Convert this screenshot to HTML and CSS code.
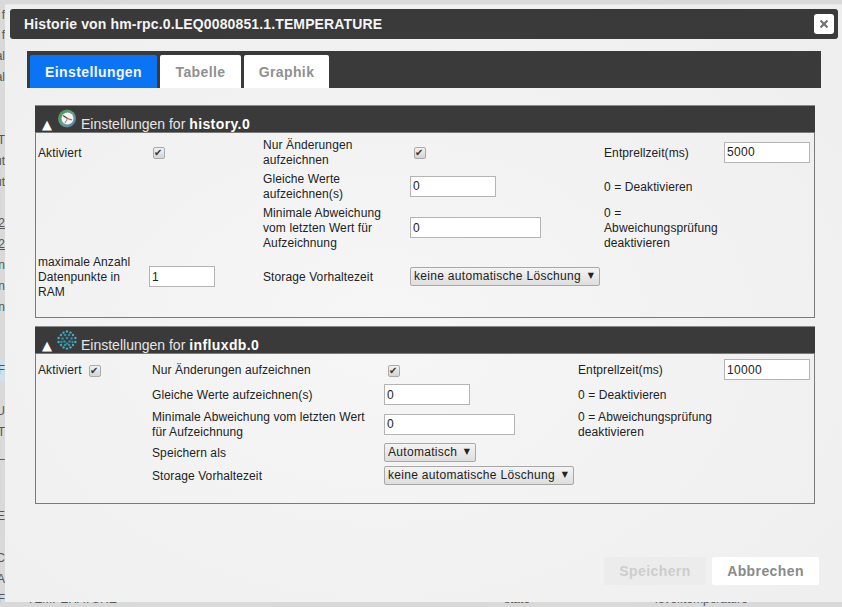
FILE: index.html
```html
<!DOCTYPE html>
<html lang="de">
<head>
<meta charset="utf-8">
<title>Historie</title>
<link rel="stylesheet" href="styles.css">
</head>
<body>
<div class="page">
  <div class="bg-row"><span class="bg-cut">f</span></div>
  <div class="bg-row"><span class="bg-cut">f</span></div>
  <div class="bg-row"><span class="bg-cut">al</span></div>
  <div class="bg-row"><span class="bg-cut">al</span></div>
  <div class="bg-row"></div>
  <div class="bg-row"></div>
  <div class="bg-row"><span class="bg-cut">T</span></div>
  <div class="bg-row"><span class="bg-cut">ut</span></div>
  <div class="bg-row"><span class="bg-cut">ut</span></div>
  <div class="bg-row"></div>
  <div class="bg-row"><span class="bg-cut bg-link">2</span></div>
  <div class="bg-row"><span class="bg-cut bg-link">2</span></div>
  <div class="bg-row"><span class="bg-cut">n</span></div>
  <div class="bg-row"><span class="bg-cut">n</span></div>
  <div class="bg-row"><span class="bg-cut">n</span></div>
  <div class="bg-row"></div>
  <div class="bg-row"></div>
  <div class="bg-row bg-selected"><span class="bg-cut">F</span></div>
  <div class="bg-row"></div>
  <div class="bg-row"><span class="bg-cut">U</span></div>
  <div class="bg-row"><span class="bg-cut">T</span></div>
  <div class="bg-row"><span class="bg-cut">_</span></div>
  <div class="bg-row"></div>
  <div class="bg-row"></div>
  <div class="bg-row"><span class="bg-cut">E</span></div>
  <div class="bg-row"></div>
  <div class="bg-row"><span class="bg-cut">C</span></div>
  <div class="bg-row"><span class="bg-cut">A</span></div>
  <div class="bg-row"><span class="bg-cut">F</span><span></span><span>TEMPERATURE</span><span>state</span><span>level.temperature</span></div>
</div>

<div class="dialog">
  <header class="titlebar">
    <span class="title">Historie von hm-rpc.0.LEQ0080851.1.TEMPERATURE</span>
    <button class="close" type="button" aria-label="Schließen">
      <svg width="10" height="10" viewBox="0 0 12 12"><path d="M2.6 1 6 4.2 9.4 1 11 2.6 7.8 6 11 9.4 9.4 11 6 7.8 2.6 11 1 9.4 4.2 6 1 2.6Z" fill="#6f6f6f"/></svg>
    </button>
  </header>

  <nav class="tabs">
    <span class="tab tab-active">Einstellungen</span>
    <span class="tab">Tabelle</span>
    <span class="tab">Graphik</span>
  </nav>

  <main class="panels">
    <section class="panel">
      <h3 class="panel-head">
        <span class="arrow">▲</span>
        <svg class="panel-icon" width="20" height="20" viewBox="0 0 20 20">
          <defs>
            <linearGradient id="ring" x1="0" y1="0" x2="1" y2="1">
              <stop offset="0" stop-color="#3f9a35"/><stop offset="0.55" stop-color="#6d9c95"/><stop offset="1" stop-color="#4d78aa"/>
            </linearGradient>
          </defs>
          <circle cx="10" cy="9.5" r="9" fill="url(#ring)"/>
          <circle cx="10.5" cy="9.5" r="6" fill="#f2f4f2"/>
          <path d="M10.5 9.5 6 6.5" stroke="#444" stroke-width="1.3"/>
          <path d="M10.5 9.5 15 11" stroke="#c8402f" stroke-width="1.3"/>
          <path d="M10.5 9.5 8 14" stroke="#7a8f99" stroke-width="1"/>
        </svg>
        <span class="panel-title">Einstellungen for <b>history.0</b></span>
      </h3>
      <div class="panel-body grid-history">
        <label class="cell">Aktiviert</label>
        <span class="cell cell-check"><input class="check" type="checkbox" checked></span>
        <label class="cell">Nur Änderungen aufzeichnen</label>
        <span class="cell cell-check"><input class="check" type="checkbox" checked></span>
        <label class="cell">Entprellzeit(ms)</label>
        <input class="field field-86" type="text" value="5000">

        <span></span><span></span>
        <label class="cell">Gleiche Werte aufzeichnen(s)</label>
        <input class="field field-86" type="text" value="0">
        <span class="cell">0 = Deaktivieren</span>
        <span></span>

        <span></span><span></span>
        <label class="cell">Minimale Abweichung vom letzten Wert für Aufzeichnung</label>
        <input class="field field-131" type="text" value="0">
        <span class="cell">0 = Abweichungsprüfung deaktivieren</span>
        <span></span>

        <label class="cell">maximale Anzahl Datenpunkte in RAM</label>
        <input class="field field-66" type="text" value="1">
        <label class="cell">Storage Vorhaltezeit</label>
        <span class="select select-190"><select><option>keine automatische Löschung</option></select></span>
        <span></span><span></span>
      </div>
    </section>

    <section class="panel">
      <h3 class="panel-head">
        <span class="arrow">▲</span>
        <svg class="panel-icon" width="20" height="20" viewBox="0 0 20 20">
          <g fill="#46adc4">
            <circle cx="10" cy="1.4" r="1.2"/><circle cx="6.5" cy="2.6" r="1.2"/><circle cx="13.5" cy="2.6" r="1.2"/>
            <circle cx="4" cy="5" r="1.2"/><circle cx="16" cy="5" r="1.2"/><circle cx="1.6" cy="8" r="1.2"/><circle cx="18.4" cy="8" r="1.2"/>
            <circle cx="1.6" cy="12" r="1.2"/><circle cx="18.4" cy="12" r="1.2"/><circle cx="4" cy="15" r="1.2"/><circle cx="16" cy="15" r="1.2"/>
            <circle cx="6.5" cy="17.4" r="1.2"/><circle cx="13.5" cy="17.4" r="1.2"/><circle cx="10" cy="18.6" r="1.2"/>
          </g>
          <g fill="#2f8fa6">
            <circle cx="8" cy="5" r="1.3"/><circle cx="12" cy="5" r="1.3"/><circle cx="5.5" cy="8.5" r="1.3"/><circle cx="10" cy="8" r="1.3"/>
            <circle cx="14.5" cy="8.5" r="1.3"/><circle cx="7.5" cy="11.5" r="1.3"/><circle cx="12.5" cy="11.5" r="1.3"/>
            <circle cx="4.5" cy="12" r="1.2"/><circle cx="15.5" cy="12" r="1.2"/><circle cx="8" cy="15" r="1.3"/><circle cx="12" cy="15" r="1.3"/>
            <circle cx="10" cy="13.5" r="1.2"/>
          </g>
        </svg>
        <span class="panel-title">Einstellungen for <b>influxdb.0</b></span>
      </h3>
      <div class="panel-body grid-influx">
        <label class="cell">Aktiviert</label>
        <span class="cell"><input class="check" type="checkbox" checked></span>
        <label class="cell">Nur Änderungen aufzeichnen</label>
        <span class="cell cell-check"><input class="check" type="checkbox" checked></span>
        <label class="cell">Entprellzeit(ms)</label>
        <input class="field field-86" type="text" value="10000">

        <span></span><span></span>
        <label class="cell">Gleiche Werte aufzeichnen(s)</label>
        <input class="field field-86" type="text" value="0">
        <span class="cell">0 = Deaktivieren</span>
        <span></span>

        <span></span><span></span>
        <label class="cell">Minimale Abweichung vom letzten Wert für Aufzeichnung</label>
        <input class="field field-131" type="text" value="0">
        <span class="cell">0 = Abweichungsprüfung deaktivieren</span>
        <span></span>

        <span></span><span></span>
        <label class="cell">Speichern als</label>
        <span class="select select-92"><select><option>Automatisch</option></select></span>
        <span></span><span></span>

        <span></span><span></span>
        <label class="cell">Storage Vorhaltezeit</label>
        <span class="select select-190"><select><option>keine automatische Löschung</option></select></span>
        <span></span><span></span>
      </div>
    </section>
  </main>

  <footer class="actions">
    <button class="btn btn-disabled" type="button">Speichern</button>
    <button class="btn" type="button">Abbrechen</button>
  </footer>
</div>
</body>
</html>
```

FILE: styles.css
```css
* {
  box-sizing: border-box;
}

html,
body {
  margin: 0;
  height: 100%;
  overflow: hidden;
}

body {
  position: relative;
  background: #d9d9d9;
  font-family: "Liberation Sans", Arial, sans-serif;
  font-size: 12px;
  color: #222;
}

/* page behind the dialog */
.page {
  padding-top: 4.5px;
  color: #555;
}

.bg-row {
  display: grid;
  grid-template-columns: 5px 22px 477px 151px 1fr;
  height: 20.9px;
  line-height: 20.9px;
  white-space: nowrap;
}

.bg-cut {
  display: flex;
  justify-content: flex-end;
  overflow: hidden;
}

.bg-link {
  text-decoration: underline;
}

.bg-selected {
  background: #cfe0ea;
}

/* dialog */
.dialog {
  position: absolute;
  top: 4px;
  left: 5px;
  right: 0;
  bottom: 5px;
  display: flex;
  flex-direction: column;
  background: radial-gradient(ellipse at 45% 55%, #f6f6f6 0%, #f2f2f2 50%, #eeeeee 100%);
  border-top: 1px solid #e6e6e6;
}

.titlebar {
  display: flex;
  align-items: center;
  justify-content: space-between;
  height: 30px;
  margin: 4px 4px 0 5px;
  padding: 0 4px 0 14px;
  background: #3a3a3a;
  border-radius: 3px;
}

.title {
  font-size: 14px;
  font-weight: bold;
  letter-spacing: 0.13px;
  color: #f4f4f4;
}

.close {
  display: flex;
  align-items: center;
  justify-content: center;
  width: 20px;
  height: 20px;
  padding: 0;
  border: 0;
  border-radius: 3px;
  background: #fff;
}

.tabs {
  display: flex;
  gap: 3px;
  height: 37px;
  margin: 12px 21px 0 22px;
  padding: 4px 3px 0;
  background: #3a3a3a;
}

.tab {
  display: flex;
  align-items: center;
  justify-content: center;
  width: 81px;
  height: 33px;
  border-radius: 2px 2px 0 0;
  background: #fff;
  font-size: 14px;
  font-weight: bold;
  letter-spacing: 0.4px;
  color: #909090;
}

.tab:last-child {
  width: 85px;
}

.tab-active {
  width: 127px;
  background: #0a74f5;
  color: #f2f7ff;
}

.panels {
  display: flex;
  flex-direction: column;
  gap: 8px;
  margin: 17px 27px 0 30px;
}

.panel-head {
  display: flex;
  align-items: flex-end;
  height: 27px;
  margin: 0;
  padding-left: 7px;
  background: #3a3a3a;
  border-top: 1px solid #8a8a8a;
  font-weight: normal;
}

.arrow {
  width: 15px;
  font-family: "DejaVu Sans", sans-serif;
  font-size: 13px;
  line-height: 15px;
  color: #fff;
}

.panel-icon {
  flex: none;
  align-self: flex-start;
  margin: 3px 4px 0 0;
}

.panel-title {
  font-size: 14px;
  line-height: 15px;
  color: #e6e6e6;
}

.panel-title b {
  letter-spacing: 0.4px;
  color: #fff;
}

.panel-body {
  display: grid;
  row-gap: 4px;
  align-items: center;
  padding: 4px 0 18px 2px;
  border: 1px solid #7a7a7a;
  line-height: 15px;
}

.grid-history {
  grid-template-columns: 111px 114px 147px 194px 120px 86px;
}

.grid-influx {
  grid-template-columns: 51px 63px 232px 194px 146px 86px;
  padding-top: 5px;
  padding-bottom: 18px;
}

.cell {
  padding-top: 1px;
  padding-right: 6px;
  margin-bottom: -1px;
  letter-spacing: 0.1px;
}

.cell-check {
  padding-left: 4px;
}

.check {
  appearance: none;
  position: relative;
  display: block;
  width: 12px;
  height: 12px;
  margin: 0;
  border: 1px solid #aaa;
  border-radius: 2px;
  background: linear-gradient(#f2f2f2, #d4d4d4);
}

.check::after {
  content: "✔";
  position: absolute;
  top: 0;
  left: 0;
  font-family: "DejaVu Sans", sans-serif;
  font-size: 10px;
  line-height: 10px;
  color: #333;
}

.field {
  height: 21px;
  padding: 0 2px;
  border: 1px solid #b4b4b4;
  background: #fff;
  font: inherit;
  letter-spacing: 0.3px;
  color: #222;
}

.field-66 {
  width: 66px;
}

.field-86 {
  width: 86px;
}

.field-131 {
  width: 131px;
}

.select {
  position: relative;
  display: block;
  height: 19px;
}

.select::after {
  content: "▼";
  position: absolute;
  top: 0;
  right: 6px;
  font-family: "DejaVu Sans", sans-serif;
  font-size: 8px;
  line-height: 17px;
  color: #222;
  pointer-events: none;
}

.select select {
  appearance: none;
  display: block;
  width: 100%;
  height: 100%;
  padding: 0 16px 0 3px;
  border: 1px solid #a8a8a8;
  border-radius: 2px;
  background: linear-gradient(#f4f4f4, #dedede);
  font: inherit;
  letter-spacing: 0.3px;
  color: #222;
}

.select-92 {
  width: 92px;
}

.select-190 {
  width: 190px;
}

.actions {
  display: flex;
  justify-content: flex-end;
  gap: 6px;
  margin: auto 23px 17px 0;
}

.btn {
  width: 107px;
  height: 28px;
  padding: 0;
  border: 0;
  border-radius: 2px;
  background: #fff;
  font-family: inherit;
  font-size: 14px;
  font-weight: bold;
  letter-spacing: 0.4px;
  color: #8a8a8a;
}

.btn-disabled {
  width: 102px;
  background: #ececec;
  color: #cdcdcd;
}
```
